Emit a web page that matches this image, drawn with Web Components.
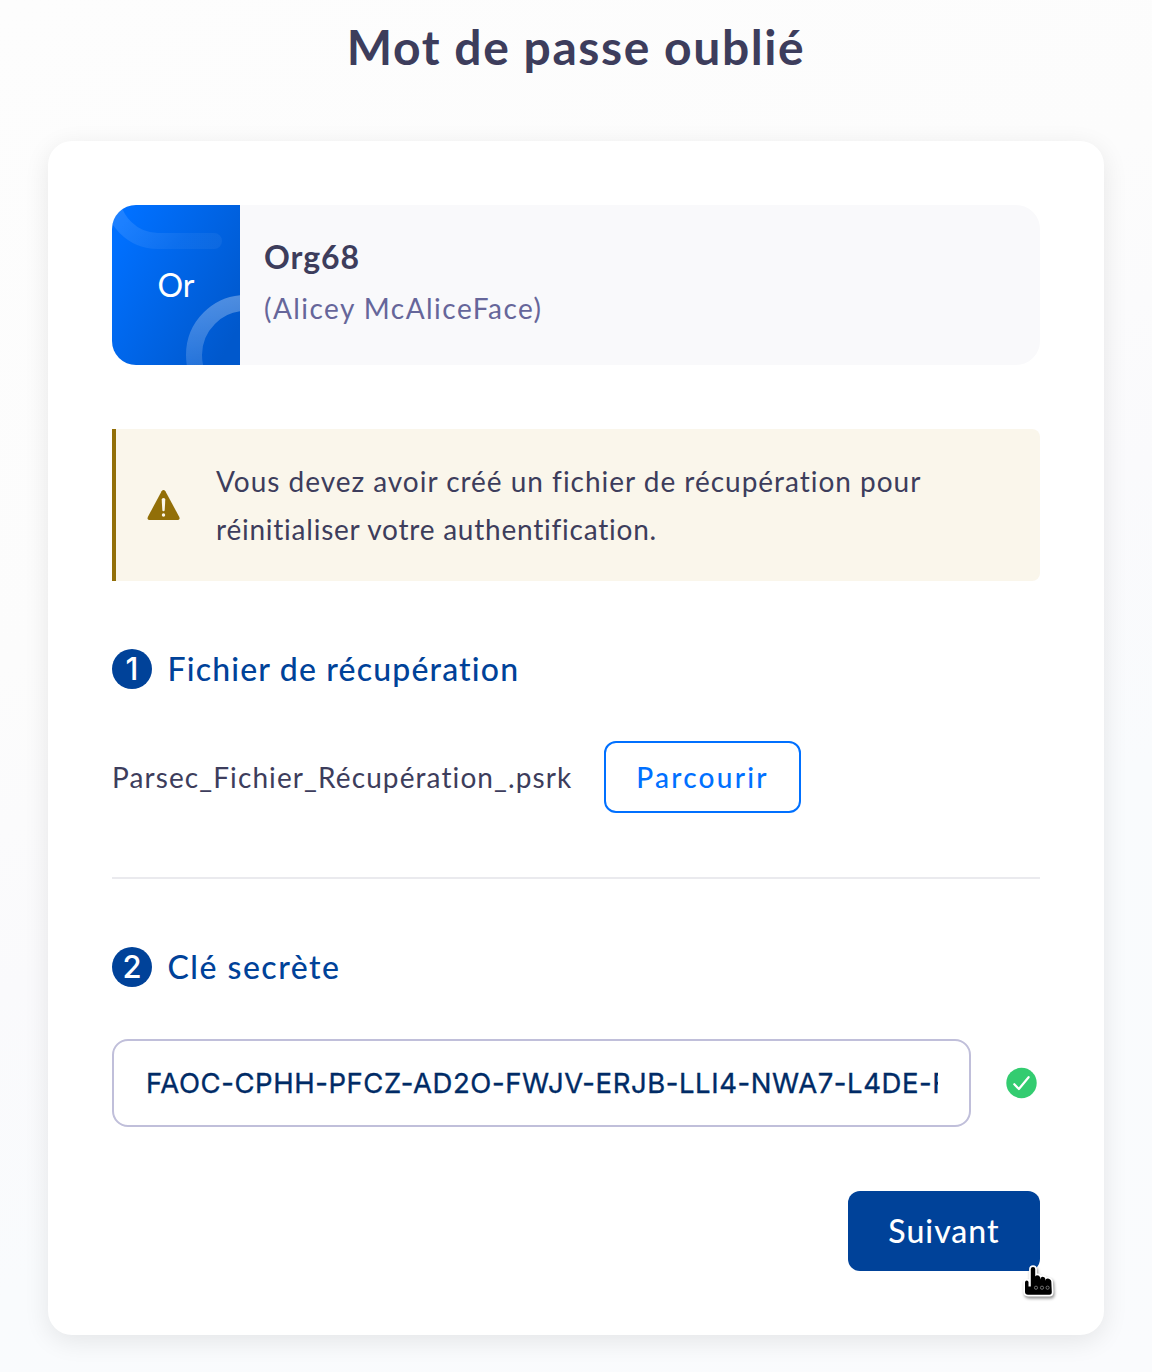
<!DOCTYPE html>
<html lang="fr">
<head>
<meta charset="utf-8">
<title>Mot de passe oublié</title>
<style>
  html, body { margin: 0; height: 100%; }
  body { font-family: Lato, "Liberation Sans", sans-serif; color: #3d3d5c; overflow: hidden; }
</style>
</head>
<body>
<forgot-password-page>
  <span slot="title">Mot de passe oublié</span>
  <org-card initials="Or">
    <span slot="name">Org68</span>
    <span slot="user">(Alicey McAliceFace)</span>
  </org-card>
  <warning-note>
    <span style="letter-spacing:.98px">Vous devez avoir créé un fichier de récupération pour</span><br>
    <span style="letter-spacing:.77px">réinitialiser votre authentification.</span>
  </warning-note>
  <step-section number="1" style="--title-spacing:1.17px">
    <span slot="title">Fichier de récupération</span>
    <file-picker>
      <span slot="file">Parsec_Fichier_Récupération_.psrk</span>
      <span slot="action">Parcourir</span>
    </file-picker>
  </step-section>
  <section-divider></section-divider>
  <step-section number="2" style="--title-spacing:1.5px">
    <span slot="title">Clé secrète</span>
    <secret-key-field value="FAOC-CPHH-PFCZ-AD2O-FWJV-ERJB-LLI4-NWA7-L4DE-FPIR"></secret-key-field>
  </step-section>
  <primary-button slot="footer">Suivant</primary-button>
</forgot-password-page>

<script>
function define(name, html, setup) {
  const template = document.createElement('template');
  template.innerHTML = html;
  customElements.define(name, class extends HTMLElement {
    connectedCallback() {
      if (this.shadowRoot) return;
      const root = this.attachShadow({ mode: 'open' });
      root.append(template.content.cloneNode(true));
      if (setup) setup(this, root);
    }
  });
}

define('forgot-password-page', `
  <style>
    :host { display: flex; flex-direction: column; box-sizing: border-box; height: 1372px; padding: 17px 48px 0;
      background: linear-gradient(155deg, #fdfdfd 0%, #fcfcfc 35%, #fafafc 52%, #f9fbfd 68%, #fafbfd 100%); }
    h1 { margin: 0 0 64px; font-size: 48px; line-height: 60px; font-weight: 700; letter-spacing: 1.57px; text-align: center; }
    .card { display: flex; flex-direction: column; box-sizing: border-box; height: 1194px; padding: 64px;
      border-radius: 24px; background: #fff; box-shadow: 0 6px 26px rgba(0,0,0,.09); }
    footer { display: flex; justify-content: flex-end; margin-top: 64px; }
  </style>
  <h1><slot name="title"></slot></h1>
  <div class="card"><slot></slot><footer><slot name="footer"></slot></footer></div>`);

define('org-card', `
  <style>
    :host { display: flex; height: 160px; border-radius: 24px; overflow: hidden; background: #f9f9fb; }
    .avatar { display: grid; width: 128px; height: 160px; flex: none;
      background: linear-gradient(118deg, #0070ff 10%, #0058cc 90%); }
    .avatar > * { grid-area: 1 / 1; }
    .initials { place-self: center; padding-bottom: 1px; color: #fff; font-size: 32px; line-height: 40px; }
    .text { padding: 27px 24px 0; }
    .name { font-size: 32px; line-height: 49px; font-weight: 700; letter-spacing: .9px; }
    .user { font-size: 28px; line-height: 55px; letter-spacing: 1.46px; color: #66669a; }
  </style>
  <div class="avatar">
    <svg width="128" height="160" viewBox="0 0 128 160" fill="none" stroke-width="16">
      <defs>
        <linearGradient id="a" gradientUnits="userSpaceOnUse" x1="20" y1="0" x2="60" y2="44"><stop stop-color="#fff" stop-opacity=".12"/><stop offset="1" stop-color="#fff" stop-opacity=".05"/></linearGradient>
        <linearGradient id="b" gradientUnits="userSpaceOnUse" x1="0" y1="90" x2="0" y2="160"><stop stop-color="#fff" stop-opacity=".31"/><stop offset="1" stop-color="#fff" stop-opacity=".15"/></linearGradient>
      </defs>
      <path d="M0-10A46 46 0 0 0 46 36H102" stroke="url(#a)" stroke-linecap="round"/>
      <circle cx="134" cy="150" r="52" stroke="url(#b)"/>
    </svg>
    <span class="initials"></span>
  </div>
  <div class="text">
    <div class="name"><slot name="name"></slot></div>
    <div class="user"><slot name="user"></slot></div>
  </div>`, (host, root) => { root.querySelector('.initials').textContent = host.getAttribute('initials'); });

define('warning-note', `
  <style>
    :host { display: flex; align-items: center; box-sizing: border-box; height: 152px; margin-top: 64px; padding-left: 31px;
      border-left: 4px solid #926f08; border-radius: 0 8px 8px 0; background: #faf6eb; }
    svg { flex: none; margin-right: 35px; }
    p { margin: 0; padding-bottom: 1px; font-size: 28px; line-height: 48px; white-space: nowrap; }
  </style>
  <svg width="34" height="32" viewBox="0 0 34 32">
    <path d="M14.6 2.2Q16.5-.2 18.4 2.2L32.3 28Q33.2 30.8 31.1 31H2.1Q0 30.8 .8 28Z" fill="#926f08"/>
    <path d="M14.7 10.5Q14.7 9 16.5 9T18.3 10.5L17.7 21.3Q17.6 22.3 16.5 22.3T15.3 21.3Z" fill="#faf6eb"/>
    <circle cx="16.5" cy="26" r="1.7" fill="#faf6eb"/>
  </svg>
  <p><slot></slot></p>`);

define('step-section', `
  <style>
    :host { display: block; margin-top: 68px; }
    header { display: flex; align-items: center; gap: 16px; height: 40px; color: #004299; }
    .number { width: 40px; height: 40px; border-radius: 50%; background: #004299; color: #fff;
      font: 500 31px/40px Inter, sans-serif; text-align: center; }
    h2 { margin: 0 0 1px -.5px; font-size: 32px; line-height: 40px; font-weight: 500; letter-spacing: var(--title-spacing, 1px); }
    .body { margin-top: 52px; }
  </style>
  <header><span class="number"></span><h2><slot name="title"></slot></h2></header>
  <div class="body"><slot></slot></div>`, (host, root) => { root.querySelector('.number').textContent = host.getAttribute('number'); });

define('file-picker', `
  <style>
    :host { display: flex; align-items: center; height: 72px; font-size: 28px; }
    .file { width: 492px; padding-bottom: 1px; letter-spacing: 1.1px; white-space: nowrap; }
    button { box-sizing: border-box; width: 197px; height: 72px; padding: 0 0 1px; border: 2px solid #0070ff; border-radius: 12px;
      background: #fff; color: #0070ff; font: 500 28px Lato, sans-serif; letter-spacing: 2.24px; }
  </style>
  <span class="file"><slot name="file"></slot></span>
  <button type="button"><slot name="action"></slot></button>`);

define('section-divider', `
  <style>:host { display: block; height: 2px; margin-top: 64px; background: #eaeaee; }</style>`);

define('secret-key-field', `
  <style>
    :host { display: flex; align-items: center; justify-content: space-between; }
    input { box-sizing: border-box; width: 859px; height: 88px; margin: 0; padding: 0 31px 0 32px; border: 2px solid #c0bfda; border-radius: 16px;
      outline: none; background: #fff; color: #002b66; font: 400 27.5px Inter, sans-serif; letter-spacing: .57px; -webkit-text-stroke: .35px #002b66; }
    svg { flex: none; }
  </style>
  <input type="text" readonly>
  <svg width="36" height="36" viewBox="0 0 36 36"><circle cx="17.5" cy="18" r="15.2" fill="#33cc70"/><path d="M10.3 19.2L14.9 24L24.6 12.2" fill="none" stroke="#fff" stroke-width="2.2" stroke-linecap="round" stroke-linejoin="round"/></svg>`,
  (host, root) => { root.querySelector('input').value = host.getAttribute('value'); });

define('primary-button', `
  <style>
    :host { display: block; position: relative; }
    button { box-sizing: border-box; width: 192px; height: 80px; padding: 0 0 1px; border: 0; border-radius: 12px; background: #004299;
      color: #fff; font: 500 32px Lato, sans-serif; letter-spacing: 1px; }
    svg { position: absolute; left: 173px; top: 72px; filter: drop-shadow(1px 2px 1.5px rgba(0,0,0,.45)); }
  </style>
  <button type="button"><slot></slot></button>
  <svg width="36" height="38" viewBox="0 0 36 38">
    <path d="M9.8 6Q9.8 4 12 4T14.2 6V13.4Q14.5 12.4 16 12.2Q18.6 12.2 19.2 14.6V16.4Q19.6 14 21.4 13.8Q23.8 13.8 24.4 16V17.8Q24.8 15.6 26.4 15.6Q29.8 16 30.3 18.5L30.8 29Q30.8 31.8 28.5 31.8H7Q4.2 31.8 4 29V19.5Q4 17.5 5.8 17.5Q7.3 17.6 7.5 19V23.5H9.8Z" fill="#000" stroke="#fff" stroke-width="3.4" stroke-linejoin="round" paint-order="stroke"/>
    <g fill="none" stroke="#999" stroke-width=".7"><circle cx="15" cy="24.7" r="1.6"/><circle cx="21" cy="24.7" r="1.6"/><circle cx="26.6" cy="24.7" r="1.6"/></g>
  </svg>`);
</script>
</body>
</html>
